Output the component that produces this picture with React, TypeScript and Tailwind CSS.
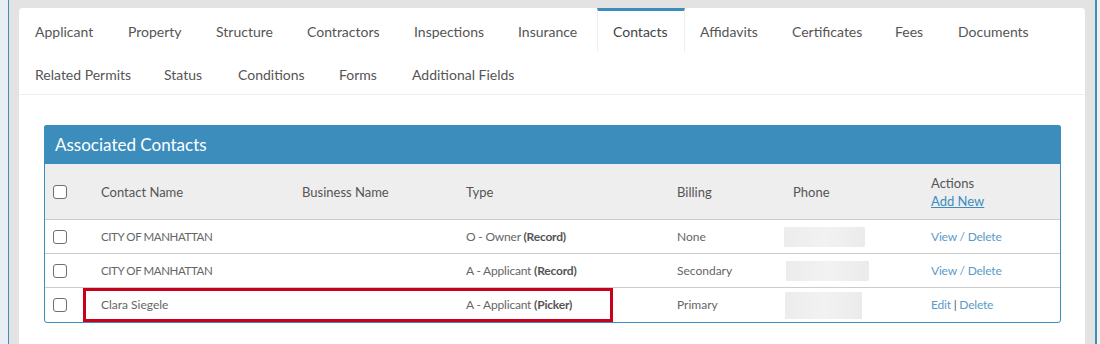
import type { ReactNode } from 'react';

const tabsTop = [
  { label: 'Applicant', w: 93 },
  { label: 'Property', w: 88 },
  { label: 'Structure', w: 91 },
  { label: 'Contractors', w: 107 },
  { label: 'Inspections', w: 104 },
  { label: 'Insurance', w: 94 },
  { label: 'Contacts', w: 88, active: true },
  { label: 'Affidavits', w: 92 },
  { label: 'Certificates', w: 103 },
  { label: 'Fees', w: 63 },
  { label: 'Documents', w: 110 },
];

const tabsBottom = [
  { label: 'Related Permits', w: 129 },
  { label: 'Status', w: 74 },
  { label: 'Conditions', w: 101 },
  { label: 'Forms', w: 73 },
  { label: 'Additional Fields', w: 130 },
];

interface Contact {
  name: string;
  type: string;
  source: string;
  billing: string;
  phoneW: number;
  phoneH: number;
  phoneX: number;
  actions: ReactNode;
}

const contacts: Contact[] = [
  {
    name: 'CITY OF MANHATTAN',
    type: 'O - Owner',
    source: 'Record',
    billing: 'None',
    phoneW: 81,
    phoneH: 20,
    phoneX: 0,
    actions: <>View / Delete</>,
  },
  {
    name: 'CITY OF MANHATTAN',
    type: 'A - Applicant',
    source: 'Record',
    billing: 'Secondary',
    phoneW: 83,
    phoneH: 20,
    phoneX: 2,
    actions: <>View / Delete</>,
  },
  {
    name: 'Clara Siegele',
    type: 'A - Applicant',
    source: 'Picker',
    billing: 'Primary',
    phoneW: 77,
    phoneH: 27,
    phoneX: 1,
    actions: (
      <>
        Edit <span className="text-[#555]">|</span> Delete
      </>
    ),
  },
];

const cols = 'grid grid-cols-[56px_201px_164px_211px_107px_147px_1fr]';

function Tab({ label, w, active, low }: { label: string; w: number; active?: boolean; low?: boolean }) {
  const base = 'shrink-0 flex items-center pl-[15px]';
  if (active)
    return (
      <div style={{ width: w }} className={`${base} h-[44px] border-t-[3px] border-t-[#3c8dbc] border-x border-x-[#eeeeee] text-[#444]`}>
        {label}
      </div>
    );
  return (
    <div
      style={{ width: w }}
      className={`${base} text-[#555] ${low ? 'h-[42px] border-t-2 border-t-transparent' : 'h-[44px] border-t-[3px] border-t-transparent'}`}
    >
      {label}
    </div>
  );
}

function Checkbox() {
  return <div className="w-[14px] h-[14px] rounded-[3px] border border-[#707070] bg-white" />;
}

export default function App() {
  return (
    <div
      className="flex w-[1100px] h-[344px] overflow-hidden bg-[#e3e3e3]"
      style={{ fontFamily: 'Lato, "Liberation Sans", sans-serif' }}
    >
      <div className="w-[9px] shrink-0 bg-[#e9eef4] border-r border-r-[#3c8dbc]" />
      <div className="flex-1 pt-2 pl-[10px] pr-[10px]">
        <div className="bg-white rounded-t-[4px] h-full">
          {/* Tabs */}
          <div className="pl-px border-b border-b-[#f0f0f0] text-[14px]">
            <div className="flex h-[44px]">
              {tabsTop.map((t) => (
                <Tab key={t.label} {...t} />
              ))}
            </div>
            <div className="flex h-[42px]">
              {tabsBottom.map((t) => (
                <Tab key={t.label} {...t} low />
              ))}
            </div>
          </div>

          {/* Associated contacts */}
          <div className="ml-[25px] mr-[24px] mt-[30px] border border-[#3c8dbc] rounded-[3px] relative">
            <div className="h-[39px] bg-[#3c8dbc] flex items-center pl-[11px] text-white text-[17px] -mx-px -mt-px rounded-t-[3px]">
              Associated Contacts
            </div>
            <div className={`${cols} h-[56px] bg-[#eeeeee] border-b border-b-[#cccccc] text-[13px] text-[#555] items-center`}>
              <div className="pl-[8px] pt-[1px]">
                <Checkbox />
              </div>
              <div className="pt-[2px]">Contact Name</div>
              <div className="pt-[2px]">Business Name</div>
              <div className="pt-[2px]">Type</div>
              <div className="pt-[2px]">Billing</div>
              <div className="pl-[9px] pt-[2px]">Phone</div>
              <div className="flex flex-col leading-[18px]">
                <span>Actions</span>
                <span className="text-[#3c8dbc] underline">Add New</span>
              </div>
            </div>
            {contacts.map((c, i) => (
              <div
                key={i}
                className={`${cols} h-[34px] items-center text-[12px] text-[#666] ${
                  i < contacts.length - 1 ? 'border-b border-b-[#cccccc]' : ''
                }`}
              >
                <div className="pl-[8px]">
                  <Checkbox />
                </div>
                <div className={c.name === c.name.toUpperCase() ? 'text-[11.5px] tracking-[-0.4px]' : ''}>{c.name}</div>
                <div />
                <div className="tracking-[-0.2px]">
                  {c.type} <b className="font-bold text-[#555]">({c.source})</b>
                </div>
                <div>{c.billing}</div>
                <div>
                  <div
                    style={{ width: c.phoneW, height: c.phoneH, marginLeft: c.phoneX }}
                    className="bg-gradient-to-r from-[#ececec] via-[#f2f2f2] to-[#ebebeb] rounded-[1px]"
                  />
                </div>
                <div className="text-[#5a9bc9] tracking-[-0.2px]">{c.actions}</div>
              </div>
            ))}
            {/* highlight around the picker row */}
            <div className="absolute left-[38px] bottom-0 w-[530px] h-[34px] border-[3px] border-[#c8001e] pointer-events-none" />
          </div>
        </div>
      </div>
      <div className="w-[2px] shrink-0 bg-[#3c8dbc]" />
      <div className="w-[3px] shrink-0 bg-[#f2f2f2]" />
    </div>
  );
}
